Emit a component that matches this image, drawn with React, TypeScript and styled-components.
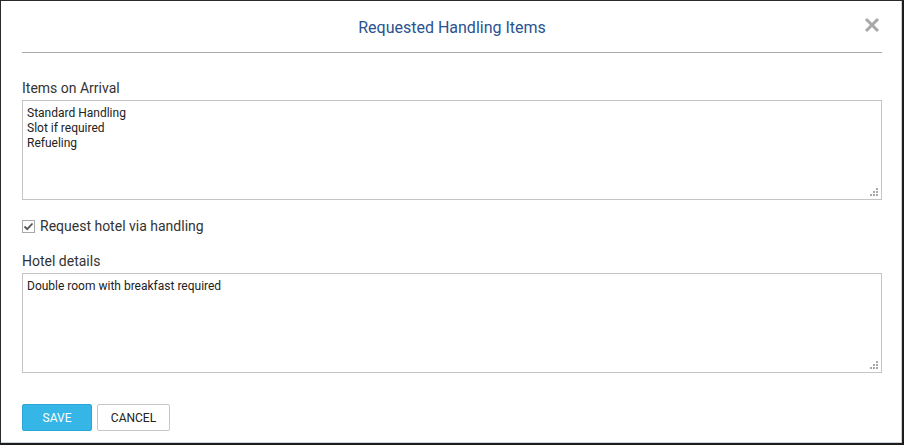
import React from "react";
import styled, { createGlobalStyle } from "styled-components";

const GlobalStyle = createGlobalStyle`
    html, body {
        margin: 0;
        padding: 0;
        background: #ffffff;
    }
    * {
        box-sizing: border-box;
    }
`;

const Dialog = styled.div`
    width: 904px;
    height: 445px;
    background-color: #ffffff;
    border-top: 1px solid #2a2a2a;
    border-left: 1px solid #2a2a2a;
    border-right: 2px solid #1c1c1c;
    border-bottom: 2px solid #1c1c1c;
    box-shadow: inset -1px -1px 0 #c9d3e0;
    font-family: Roboto, "Liberation Sans", sans-serif;
    color: #333333;
    display: flex;
    flex-direction: column;
`;

const Header = styled.div`
    margin: 0 20px 0 21px;
    height: 52px;
    border-bottom: 1px solid #a9a9a9;
    display: grid;
    grid-template-columns: 1fr auto 1fr;
    align-items: center;
`;

const Title = styled.h2`
    grid-column: 2;
    margin: 0;
    padding-top: 1px;
    font-size: 16px;
    font-weight: 400;
    color: #2a5291;
`;

const CloseButton = styled.button`
    grid-column: 3;
    justify-self: end;
    margin-right: 0;
    margin-top: -4px;
    width: 20px;
    height: 20px;
    padding: 0;
    border: none;
    background: none;
    cursor: pointer;
    display: flex;
    align-items: center;
    justify-content: center;
`;

const Body = styled.div`
    padding: 0 20px 0 21px;
    display: flex;
    flex-direction: column;
`;

interface LabelProps {
    top: number;
}
const FieldLabel = styled.label<LabelProps>`
    display: block;
    margin-top: ${(props) => props.top}px;
    font-size: 14px;
    line-height: 18px;
    color: #333333;
`;

const AreaWrap = styled.div`
    position: relative;
    margin-top: 3px;
`;

const TextArea = styled.textarea`
    display: block;
    width: 100%;
    height: 100px;
    margin: 0;
    padding: 5px 4px;
    border: 1px solid #c4c4c4;
    border-radius: 0;
    resize: none;
    font-family: Roboto, "Liberation Sans", sans-serif;
    font-size: 12px;
    line-height: 15px;
    color: #222222;
    outline: none;
`;

const Grip = styled.svg`
    position: absolute;
    right: 3px;
    bottom: 3px;
`;

const CheckRow = styled.label`
    margin-top: 17px;
    height: 18px;
    display: flex;
    align-items: center;
    gap: 5px;
    font-size: 14px;
    color: #333333;
    cursor: pointer;
`;

const CheckBox = styled.span`
    width: 13px;
    height: 13px;
    border: 1px solid #a8a8a8;
    background: #ffffff;
    display: flex;
    align-items: center;
    justify-content: center;
`;

const Actions = styled.div`
    margin-top: 31px;
    display: flex;
    gap: 5px;
`;

interface ButtonProps {
    primary?: boolean;
    width: number;
}
const Button = styled.button<ButtonProps>`
    width: ${(props) => props.width}px;
    height: 27px;
    padding: 0;
    border: 1px solid ${(props) => (props.primary ? "#2ba6d6" : "#c6c6c6")};
    border-radius: 2px;
    background-color: ${(props) => (props.primary ? "#35b6e6" : "#ffffff")};
    color: ${(props) => (props.primary ? "#ffffff" : "#222222")};
    font-family: Roboto, "Liberation Sans", sans-serif;
    font-size: 12px;
    text-transform: uppercase;
    cursor: pointer;
`;

const ResizeGrip = () => (
    <Grip width="9" height="9" viewBox="0 0 9 9">
        <rect x="6" y="0" width="2" height="2" fill="#a9a9a9" />
        <rect x="3" y="3" width="2" height="2" fill="#a9a9a9" />
        <rect x="6" y="3" width="2" height="2" fill="#a9a9a9" />
        <rect x="0" y="6" width="2" height="2" fill="#a9a9a9" />
        <rect x="3" y="6" width="2" height="2" fill="#a9a9a9" />
        <rect x="6" y="6" width="2" height="2" fill="#a9a9a9" />
    </Grip>
);

export default function App() {
    const [arrival, setArrival] = React.useState(
        "Standard Handling\nSlot if required\nRefueling"
    );
    const [hotel, setHotel] = React.useState(
        "Double room with breakfast required"
    );
    const [wantHotel, setWantHotel] = React.useState(true);

    return (
        <>
            <GlobalStyle />
            <Dialog>
                <Header>
                    <Title>Requested Handling Items</Title>
                    <CloseButton aria-label="Close">
                        <svg width="16" height="16" viewBox="0 0 16 16">
                            <path
                                d="M2 2 L14 14 M14 2 L2 14"
                                stroke="#a8a8a8"
                                strokeWidth="3"
                                strokeLinecap="butt"
                            />
                        </svg>
                    </CloseButton>
                </Header>
                <Body>
                    <FieldLabel top={26}>Items on Arrival</FieldLabel>
                    <AreaWrap>
                        <TextArea
                            value={arrival}
                            onChange={(e) => setArrival(e.target.value)}
                        />
                        <ResizeGrip />
                    </AreaWrap>
                    <CheckRow onClick={() => setWantHotel(!wantHotel)}>
                        <CheckBox>
                            {wantHotel && (
                                <svg width="11" height="11" viewBox="0 0 11 11">
                                    <path
                                        d="M1.5 5.5 L4.2 8.2 L9.5 2.5"
                                        stroke="#555555"
                                        strokeWidth="1.8"
                                        fill="none"
                                    />
                                </svg>
                            )}
                        </CheckBox>
                        Request hotel via handling
                    </CheckRow>
                    <FieldLabel top={17}>Hotel details</FieldLabel>
                    <AreaWrap>
                        <TextArea
                            value={hotel}
                            onChange={(e) => setHotel(e.target.value)}
                        />
                        <ResizeGrip />
                    </AreaWrap>
                    <Actions>
                        <Button primary width={70}>
                            Save
                        </Button>
                        <Button width={73}>Cancel</Button>
                    </Actions>
                </Body>
            </Dialog>
        </>
    );
}
